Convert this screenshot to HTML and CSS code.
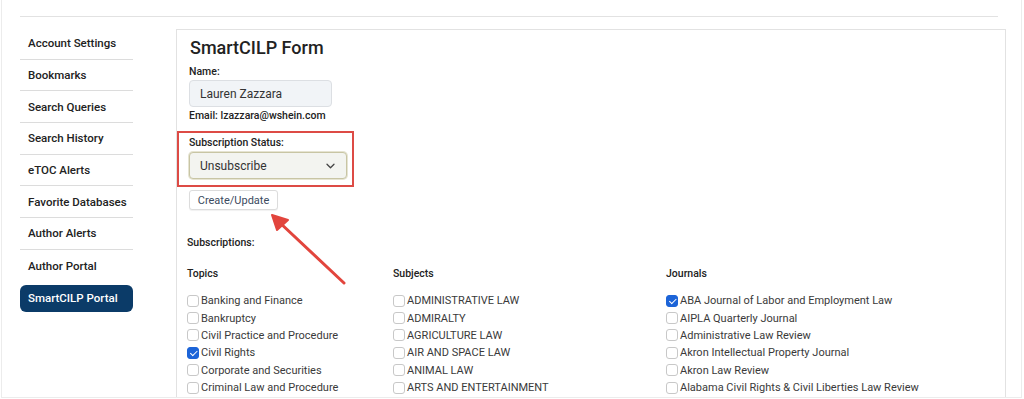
FILE: index.html
```html
<!DOCTYPE html>
<html lang="en">
<head>
    <meta charset="UTF-8">
    <meta name="viewport" content="width=device-width, initial-scale=1.0">
    <title>SmartCILP Form</title>
    <link rel="stylesheet" href="styles.css">
</head>
<body>
    <div class="frame">
        <div class="topline"></div>
        <div class="main">
            <ul class="sidebar">
                <li>Account Settings</li>
                <li>Bookmarks</li>
                <li>Search Queries</li>
                <li>Search History</li>
                <li>eTOC Alerts</li>
                <li>Favorite Databases</li>
                <li>Author Alerts</li>
                <li class="last">Author Portal</li>
                <li class="active">SmartCILP Portal</li>
            </ul>

            <div class="panel">
                <h1>SmartCILP Form</h1>
                <div class="form">
                    <label class="lbl">Name:</label>
                    <div class="input">Lauren Zazzara</div>
                    <div class="email">Email: lzazzara@wshein.com</div>

                    <div class="highlight">
                        <label class="lbl">Subscription Status:</label>
                        <div class="select">
                            <span>Unsubscribe</span>
                            <svg width="9" height="6" viewBox="0 0 9 6"><path d="M1 1.2l3.5 3.5 3.5-3.5" fill="none" stroke="#444" stroke-width="1.3" stroke-linecap="round" stroke-linejoin="round"/></svg>
                        </div>
                    </div>

                    <button type="button" class="btn">Create/Update</button>
                </div>

                <div class="subs-title">Subscriptions:</div>

                <div class="columns">
                    <div class="col">
                        <div class="col-title">Topics</div>
                        <div class="check"><span class="box"></span>Banking and Finance</div>
                        <div class="check"><span class="box"></span>Bankruptcy</div>
                        <div class="check"><span class="box"></span>Civil Practice and Procedure</div>
                        <div class="check"><span class="box on"></span>Civil Rights</div>
                        <div class="check"><span class="box"></span>Corporate and Securities</div>
                        <div class="check"><span class="box"></span>Criminal Law and Procedure</div>
                    </div>
                    <div class="col">
                        <div class="col-title">Subjects</div>
                        <div class="check"><span class="box"></span>ADMINISTRATIVE LAW</div>
                        <div class="check"><span class="box"></span>ADMIRALTY</div>
                        <div class="check"><span class="box"></span>AGRICULTURE LAW</div>
                        <div class="check"><span class="box"></span>AIR AND SPACE LAW</div>
                        <div class="check"><span class="box"></span>ANIMAL LAW</div>
                        <div class="check"><span class="box"></span>ARTS AND ENTERTAINMENT</div>
                    </div>
                    <div class="col">
                        <div class="col-title">Journals</div>
                        <div class="check"><span class="box on"></span>ABA Journal of Labor and Employment Law</div>
                        <div class="check"><span class="box"></span>AIPLA Quarterly Journal</div>
                        <div class="check"><span class="box"></span>Administrative Law Review</div>
                        <div class="check"><span class="box"></span>Akron Intellectual Property Journal</div>
                        <div class="check"><span class="box"></span>Akron Law Review</div>
                        <div class="check"><span class="box"></span>Alabama Civil Rights &amp; Civil Liberties Law Review</div>
                    </div>
                </div>

                <!-- annotation arrow -->
                <svg class="arrow" width="90" height="80" viewBox="0 0 90 80">
                    <path d="M80 75L14 13" stroke="#e2453d" stroke-width="3" stroke-linecap="round"/>
                    <path d="M8 7L24 12L13 22Z" fill="#e2453d" stroke="#e2453d" stroke-width="2" stroke-linejoin="round"/>
                </svg>
            </div>
        </div>
    </div>
</body>
</html>
```

FILE: styles.css
```css
* {
    box-sizing: border-box;
}

body {
    margin: 0;
    font-family: 'Roboto', 'Liberation Sans', sans-serif;
    background-color: #ffffff;
    color: #222;
    overflow: hidden;
}

.frame {
    margin: 0 2px 0 1px;
    height: 398px;
    border: 1px solid #ececec;
    border-top: none;
    padding: 16px 0 0 18px;
    overflow: hidden;
}

.topline {
    width: 978px;
    border-top: 1px solid #e2e2e2;
}

.main {
    display: flex;
    align-items: flex-start;
    gap: 43px;
}

.sidebar {
    list-style: none;
    margin: 11px 0 0 0;
    padding: 0;
    width: 113px;
    flex-shrink: 0;
}

.sidebar li {
    height: 31.7px;
    border-bottom: 1px solid #dcdcdc;
    padding-left: 8px;
    display: flex;
    align-items: center;
    font-size: 11.5px;
    font-weight: 500;
    color: #222;
}

.sidebar li.last {
    border-bottom: none;
}

.sidebar li.active {
    margin-top: 3px;
    height: 27px;
    border: none;
    border-radius: 6px;
    background-color: #0b3b68;
    color: #ffffff;
}

.panel {
    position: relative;
    width: 830px;
    height: 400px;
    margin-top: 12px;
    border: 1px solid #e2e2e2;
    padding: 6px 0 0 10px;
}

h1 {
    margin: 0 0 0 3px;
    font-size: 18px;
    font-weight: 500;
    line-height: 24px;
    color: #222;
}

.form {
    padding-left: 2px;
}

.lbl {
    display: block;
    margin-top: 5px;
    font-size: 10.5px;
    font-weight: 500;
    line-height: 14px;
    color: #222;
}

.input {
    margin-top: 1px;
    width: 143px;
    height: 27px;
    border: 1px solid #dcdfe3;
    border-radius: 4px;
    background-color: #f1f4f7;
    padding-left: 10px;
    display: flex;
    align-items: center;
    font-size: 12px;
    color: #333;
}

.email {
    margin-top: 2px;
    font-size: 10.5px;
    font-weight: 500;
    line-height: 14px;
    color: #222;
}

.highlight {
    margin: 8px 0 0 -12px;
    width: 177px;
    height: 56px;
    border: 2px solid #dd4b45;
    padding: 0 5px 0 10px;
}

.highlight .lbl {
    margin-top: 3px;
}

.select {
    margin-top: 2px;
    height: 27px;
    border: 1px solid #c8c5a4;
    border-radius: 4px;
    background-color: #f3f4f0;
    box-shadow: 0 0 0 1px #e6e4d2;
    display: flex;
    align-items: center;
    justify-content: space-between;
    padding: 0 11px 0 10px;
    font-size: 12px;
    color: #333;
}

.btn {
    display: block;
    margin-top: 3px;
    width: 89px;
    height: 20px;
    border: 1px solid #dcdcdc;
    border-radius: 3px;
    background-color: #ffffff;
    padding: 0;
    font-family: inherit;
    font-size: 11px;
    color: #3b4a5e;
    box-shadow: 0 1px 1px rgba(0, 0, 0, 0.06);
}

.subs-title {
    margin-top: 26px;
    font-size: 10.5px;
    font-weight: 500;
    line-height: 14px;
    color: #222;
}

.columns {
    display: grid;
    grid-template-columns: 206px 273px 1fr;
    margin-top: 17px;
}

.col-title {
    font-size: 10.5px;
    font-weight: 500;
    line-height: 14px;
    color: #222;
    margin-bottom: 11px;
}

.check {
    display: flex;
    align-items: center;
    height: 17.4px;
    font-size: 11px;
    color: #3a3a3a;
}

.box {
    width: 12px;
    height: 12px;
    border: 1px solid #c8c8c8;
    border-radius: 3px;
    margin-right: 2px;
    flex-shrink: 0;
    position: relative;
}

.box.on {
    background-color: #1c64d8;
    border-color: #1c64d8;
}

.box.on::after {
    content: "";
    position: absolute;
    left: 3.5px;
    top: 1.5px;
    width: 3px;
    height: 5.5px;
    border: solid #ffffff;
    border-width: 0 1.6px 1.6px 0;
    transform: rotate(45deg);
}

.arrow {
    position: absolute;
    left: 87px;
    top: 178px;
}
```
